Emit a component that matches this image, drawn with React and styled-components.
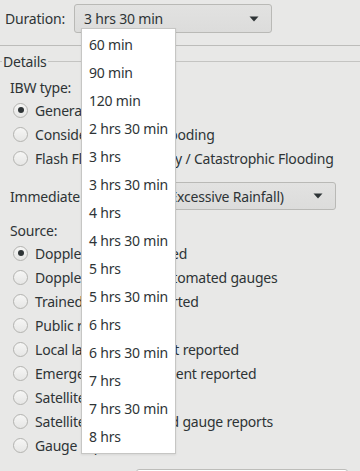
import React from 'react'
import styled, { createGlobalStyle } from 'styled-components'

const GlobalStyle = createGlobalStyle`
  html, body {
    margin: 0;
    padding: 0;
    background: #e8e8e7;
  }
  body {
    font-family: "Noto Sans", "DejaVu Sans", sans-serif;
    font-size: 14px;
    letter-spacing: -0.2px;
    color: #2e3436;
    overflow: hidden;
  }
`

const durations = [
  '60 min', '90 min', '120 min', '2 hrs 30 min', '3 hrs', '3 hrs 30 min',
  '4 hrs', '4 hrs 30 min', '5 hrs', '5 hrs 30 min', '6 hrs', '6 hrs 30 min',
  '7 hrs', '7 hrs 30 min', '8 hrs',
]

const ibwTypes = [
  { label: 'General', checked: true },
  { label: 'Considerable Flash Flooding' },
  { label: 'Flash Flood Emergency / Catastrophic Flooding' },
]

const sources = [
  { label: 'Doppler radar indicated', checked: true },
  { label: 'Doppler radar and automated gauges' },
  { label: 'Trained spotters reported' },
  { label: 'Public reported' },
  { label: 'Local law enforcement reported' },
  { label: 'Emergency management reported' },
  { label: 'Satellite estimates' },
  { label: 'Satellite estimates and gauge reports' },
  { label: 'Gauge reports' },
]

const Arrow = () => (
  <svg width="10" height="6" viewBox="0 0 10 6">
    <path d="M0.5 0.5 L9.5 0.5 L5 5.5 Z" fill="#2e3436" />
  </svg>
)

const Radio = ({ label, checked }) => (
  <RadioRow>
    <RadioCircle $checked={checked} />
    <span>{label}</span>
  </RadioRow>
)

const App = () => {
  return (
    <Page>
      <GlobalStyle />
      <TopRow>
        <FieldLabel $width="69px">Duration:</FieldLabel>
        <Combo $width="198px" $height="29px">
          <span>3 hrs 30 min</span>
          <Arrow />
        </Combo>
      </TopRow>

      <Frame>
        <Legend>
          <LegendLine $short />
          <span>Details</span>
          <LegendLine />
        </Legend>

        <Section>
          <GroupLabel>IBW type:</GroupLabel>
          {ibwTypes.map((t) => (
            <Radio key={t.label} label={t.label} checked={t.checked} />
          ))}
        </Section>

        <FormRow>
          <FieldLabel $width="126px">Immediate Cause:</FieldLabel>
          <Combo $grow $height="28px">
            <span>ER (Excessive Rainfall)</span>
            <Arrow />
          </Combo>
        </FormRow>

        <Section>
          <GroupLabel>Source:</GroupLabel>
          {sources.map((s) => (
            <Radio key={s.label} label={s.label} checked={s.checked} />
          ))}
        </Section>

        <EntryRow>
          <Entry />
        </EntryRow>
      </Frame>

      <Menu>
        {durations.map((d) => (
          <MenuItem key={d}>{d}</MenuItem>
        ))}
      </Menu>
    </Page>
  )
}

const Page = styled.div`
  position: relative;
  width: 360px;
  height: 471px;
  overflow: hidden;
`

const TopRow = styled.div`
  display: flex;
  align-items: center;
  padding: 4px 0 12px 5px;
  border-bottom: 1px solid #bcbcba;
`

const FieldLabel = styled.span`
  width: ${(p) => p.$width};
  flex-shrink: 0;
  white-space: nowrap;
`

const Combo = styled.div`
  box-sizing: border-box;
  display: flex;
  align-items: center;
  justify-content: space-between;
  height: ${(p) => p.$height};
  width: ${(p) => p.$width || 'auto'};
  flex: ${(p) => (p.$grow ? 1 : 'none')};
  padding: 0 12px 0 9px;
  border: 1px solid #b9b9b6;
  border-radius: 3px;
  background: linear-gradient(to bottom, #e2e2e1, #dcdcdb);
  white-space: nowrap;
  overflow: hidden;
`

const Frame = styled.div`
  display: flex;
  flex-direction: column;
  margin-top: 6px;
`

const Legend = styled.div`
  display: flex;
  align-items: center;
  height: 18px;
  gap: 1px;
`

const LegendLine = styled.div`
  height: 1px;
  background: #c4c4c2;
  width: ${(p) => (p.$short ? '2px' : 'auto')};
  flex: ${(p) => (p.$short ? 'none' : 1)};
`

const Section = styled.div`
  display: flex;
  flex-direction: column;
  padding-left: 10px;
  margin-top: 8px;
`

const GroupLabel = styled.div`
  height: 20px;
  line-height: 20px;
`

const RadioRow = styled.div`
  display: flex;
  align-items: center;
  gap: 7px;
  height: 24px;
  padding-left: 3px;
  white-space: nowrap;
`

const RadioCircle = styled.span`
  position: relative;
  box-sizing: border-box;
  width: 15px;
  height: 15px;
  border-radius: 50%;
  border: 1px solid #b3b3b0;
  background: linear-gradient(to bottom, #f6f6f5, #e6e6e5);
  flex-shrink: 0;
  &::after {
    content: '';
    display: ${(p) => (p.$checked ? 'block' : 'none')};
    position: absolute;
    left: 50%;
    top: 50%;
    width: 6px;
    height: 6px;
    margin: -3px 0 0 -3px;
    border-radius: 50%;
    background: #2e3436;
  }
`

const FormRow = styled.div`
  display: flex;
  align-items: center;
  padding: 0 24px 0 10px;
  margin: 12px 0 3px;
`

const EntryRow = styled.div`
  display: flex;
  padding: 0 12px 0 136px;
  margin-top: 12px;
`

const Entry = styled.div`
  flex: 1;
  height: 29px;
  border: 1px solid #bdbdba;
  border-radius: 3px;
  background: #ffffff;
`

const Menu = styled.div`
  position: absolute;
  left: 81px;
  top: 28px;
  width: 93px;
  padding: 2px 0;
  background: #ffffff;
  border: 1px solid #c6c6c4;
  box-shadow: 0 1px 2px rgba(0, 0, 0, 0.08);
`

const MenuItem = styled.div`
  height: 28px;
  line-height: 28px;
  padding-left: 7px;
  white-space: nowrap;
`

export default App
